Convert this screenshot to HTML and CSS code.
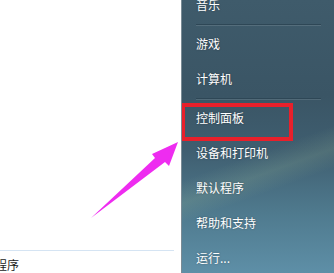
FILE: index.html
```html
<!DOCTYPE html>
<html lang="zh-CN">
<head>
<meta charset="utf-8">
<link rel="stylesheet" href="styles.css">
</head>
<body>
<div class="screen">
  <div class="left-pane">
    <div class="all-programs">
      <span class="all-label">程序</span>
    </div>
  </div>
  <div class="right-pane">
    <ul class="menu">
      <li class="item">音乐</li>
      <li class="sep"></li>
      <li class="item">游戏</li>
      <li class="item">计算机</li>
      <li class="sep"></li>
      <li class="item">控制面板</li>
      <li class="item">设备和打印机</li>
      <li class="item">默认程序</li>
      <li class="item">帮助和支持</li>
      <li class="item">运行...</li>
    </ul>
    <div class="highlight"></div>
  </div>
  <svg class="arrow" width="334" height="273" viewBox="0 0 334 273">
    <polygon points="91,218 155,158 152,154 178,142 169,166 165,162" fill="#ee2cf0"/>
  </svg>
</div>
</body>
</html>
```
FILE: styles.css
```css
html, body {
  margin: 0;
  padding: 0;
  width: 334px;
  height: 273px;
  overflow: hidden;
  background: #ffffff;
}

.screen {
  position: relative;
  display: flex;
  width: 334px;
  height: 273px;
  font-family: "Noto Sans CJK SC", "Noto Sans", sans-serif;
  font-size: 12px;
}

.left-pane {
  width: 181px;
  flex: none;
  background: #ffffff;
  display: flex;
  flex-direction: column;
  justify-content: flex-end;
}

.all-programs {
  width: 174px;
  height: 22px;
  border-top: 1px solid #d5e4f3;
  margin-bottom: 0;
  display: flex;
  align-items: center;
}

.all-label {
  margin-left: -5px;
  color: #1b1b1b;
  line-height: 1;
  padding-top: 5px;
}

.right-pane {
  position: relative;
  flex: 1;
  border-left: 1px solid #7a8b95;
  background:
    linear-gradient(160deg, rgba(255,255,255,0) 55%, rgba(160,190,150,0.18) 62%, rgba(255,255,255,0) 68%),
    linear-gradient(to bottom, #3f5b6b 0%, #3a5565 35%, #3f5e70 55%, #4f7a8e 78%, #5e8fa7 100%);
  overflow: hidden;
}

.menu {
  list-style: none;
  margin: -13px 0 0 0;
  padding: 0;
}

.item {
  height: 35px;
  line-height: 35px;
  padding-left: 14px;
  color: #ffffff;
  text-shadow: 0 0 2px rgba(0,0,0,0.35);
  white-space: nowrap;
}

.sep {
  height: 4px;
  margin: 0 13px 0 14px;
  box-sizing: border-box;
  border-top: 1px solid transparent;
  display: flex;
  flex-direction: column;
}

.sep::before {
  content: "";
  display: block;
  height: 1px;
  margin-top: 1px;
  background: #2e4756;
}

.sep::after {
  content: "";
  display: block;
  height: 1px;
  background: rgba(255,255,255,0.12);
}

.highlight {
  position: absolute;
  left: -1px;
  top: 103px;
  width: 112px;
  height: 38px;
  box-sizing: border-box;
  border: 4px solid #e8202b;
}

.arrow {
  position: absolute;
  left: 0;
  top: 0;
  pointer-events: none;
}
```
